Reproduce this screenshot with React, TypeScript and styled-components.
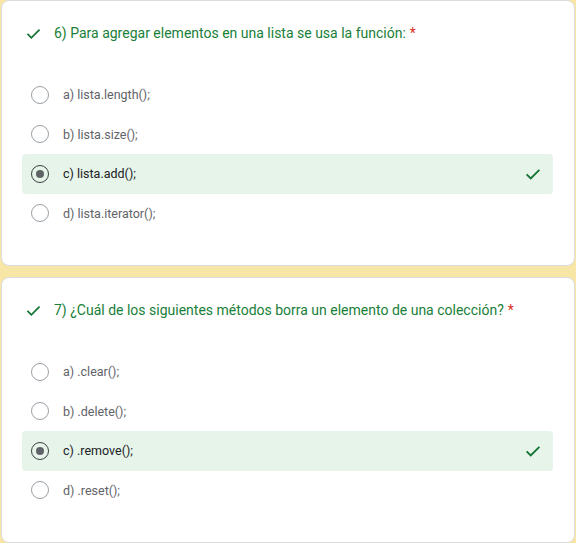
import React from "react";
import styled, { createGlobalStyle } from "styled-components";

const Global = createGlobalStyle`
  html, body { margin: 0; padding: 0; background: #ffffff; }
  body { font-family: Roboto, "Noto Sans", Arial, sans-serif; }
`;

const Page = styled.div`
  background: #f7e6a6;
  display: flex;
  flex-direction: column;
  gap: 11px;
  padding: 0 1px;
`;

const Card = styled.section`
  background: #fff;
  border: 1px solid #dadce0;
  border-radius: 8px;
  padding: 23px 21px 32px 20px;
  display: flex;
  flex-direction: column;
`;

const Heading = styled.div`
  display: flex;
  align-items: center;
  height: 18px;
  padding-left: 3px;
  gap: 12px;
  color: #188038;
  font-size: 14px;
`;

const Star = styled.span`
  color: #d93025;
  margin-left: 4px;
`;

const Options = styled.div`
  display: flex;
  flex-direction: column;
  margin-top: 33px;
`;

const Row = styled.div<{ $selected?: boolean }>`
  height: 39.5px;
  display: flex;
  align-items: center;
  padding: 0 11px 0 9px;
  border-radius: 4px;
  background: ${(p) => (p.$selected ? "#e6f4ea" : "transparent")};
  font-size: 12.5px;
  color: ${(p) => (p.$selected ? "#202124" : "#5f6368")};
`;

const Radio = styled.span<{ $checked?: boolean }>`
  width: 18px;
  height: 18px;
  box-sizing: border-box;
  border-radius: 50%;
  border: ${(p) => (p.$checked ? "1.5px solid #3c4043" : "1.3px solid #9aa0a6")};
  display: flex;
  align-items: center;
  justify-content: center;
  flex: none;
  &::after {
    content: "";
    display: ${(p) => (p.$checked ? "block" : "none")};
    width: 8px;
    height: 8px;
    border-radius: 50%;
    background: #5f6368;
  }
`;

const Label = styled.span`
  margin-left: 14px;
  flex: 1;
`;

const Check = ({ size = 16 }: { size?: number }) => (
  <svg width={size} height={size} viewBox="0 0 24 24" fill="none">
    <path d="M3.5 12.5 L9 18 L20.5 6.5" stroke="#137333" strokeWidth="2.4" />
  </svg>
);

type Q = { title: string; options: string[]; correct: number };

const questions: Q[] = [
  {
    title: "6) Para agregar elementos en una lista se usa la función:",
    options: ["a) lista.length();", "b) lista.size();", "c) lista.add();", "d) lista.iterator();"],
    correct: 2,
  },
  {
    title: "7) ¿Cuál de los siguientes métodos borra un elemento de una colección?",
    options: ["a) .clear();", "b) .delete();", "c) .remove();", "d) .reset();"],
    correct: 2,
  },
];

export default function App() {
  return (
    <>
      <Global />
      <Page>
        {questions.map((q) => (
          <Card key={q.title}>
            <Heading>
              <Check size={17} />
              <span>
                {q.title}
                <Star>*</Star>
              </span>
            </Heading>
            <Options>
              {q.options.map((o, i) => (
                <Row key={o} $selected={i === q.correct}>
                  <Radio $checked={i === q.correct} />
                  <Label>{o}</Label>
                  {i === q.correct && <Check size={18} />}
                </Row>
              ))}
            </Options>
          </Card>
        ))}
      </Page>
    </>
  );
}
